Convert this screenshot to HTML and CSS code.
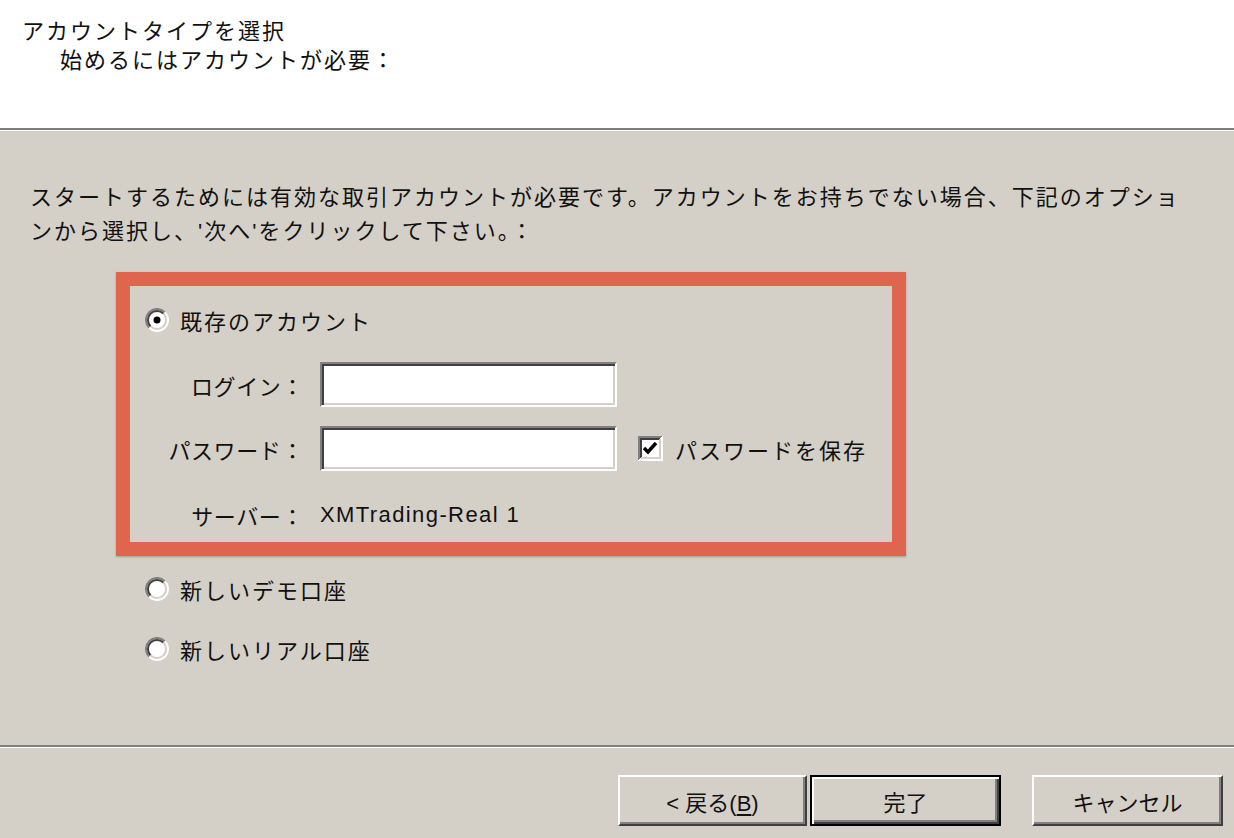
FILE: index.html
```html
<!DOCTYPE html>
<html lang="ja">

<head>
    <meta charset="UTF-8">
    <title>アカウントタイプを選択</title>
    <link rel="stylesheet" href="styles.css">
</head>

<body>
    <div class="wizard">
        <header class="wizard-head">
            <div class="title">アカウントタイプを選択</div>
            <div class="subtitle">始めるにはアカウントが必要：</div>
        </header>

        <main class="wizard-body">
            <p class="intro">スタートするためには有効な取引アカウントが必要です。アカウントをお持ちでない場合、下記のオプショ<br>ンから選択し、'次へ'をクリックして下さい。：</p>

            <div class="options">
                <div class="existing">
                    <label class="option">
                        <svg class="radio" width="24" height="24" viewBox="0 0 24 24">
                            <circle cx="12" cy="12" r="10" fill="#fff" />
                            <path d="M19.8 4.2A11 11 0 0 0 4.2 19.8" fill="none" stroke="#808080" stroke-width="2" />
                            <path d="M4.2 19.8A11 11 0 0 0 19.8 4.2" fill="none" stroke="#fff" stroke-width="2" />
                            <path d="M18.4 5.6A9 9 0 0 0 5.6 18.4" fill="none" stroke="#404040" stroke-width="2" />
                            <path d="M5.6 18.4A9 9 0 0 0 18.4 5.6" fill="none" stroke="#d4d0c8" stroke-width="2" />
                            <circle cx="12" cy="12" r="3.5" fill="#000" />
                        </svg>
                        <span>既存のアカウント</span>
                    </label>

                    <div class="fields">
                        <span class="field-label">ログイン：</span>
                        <input class="sunken" type="text">
                        <span></span>

                        <span class="field-label">パスワード：</span>
                        <input class="sunken" type="password">
                        <label class="check">
                            <svg class="checkbox" width="25" height="25" viewBox="0 0 25 25">
                                <rect x="0" y="0" width="25" height="25" fill="#fff" />
                                <path d="M1 24V1H24" fill="none" stroke="#808080" stroke-width="2" />
                                <path d="M3 22V3H22" fill="none" stroke="#404040" stroke-width="2" />
                                <path d="M1 24H24V1" fill="none" stroke="#fff" stroke-width="2" />
                                <path d="M3 22H22V3" fill="none" stroke="#d4d0c8" stroke-width="2" />
                                <path d="M6 12L10 16L18 7" fill="none" stroke="#000" stroke-width="3.4" />
                            </svg>
                            <span>パスワードを保存</span>
                        </label>

                        <span class="field-label">サーバー：</span>
                        <span class="server">XMTrading-Real 1</span>
                        <span></span>
                    </div>
                </div>

                <label class="option other">
                    <svg class="radio" width="24" height="24" viewBox="0 0 24 24">
                        <circle cx="12" cy="12" r="10" fill="#fff" />
                        <path d="M19.8 4.2A11 11 0 0 0 4.2 19.8" fill="none" stroke="#808080" stroke-width="2" />
                        <path d="M4.2 19.8A11 11 0 0 0 19.8 4.2" fill="none" stroke="#fff" stroke-width="2" />
                        <path d="M18.4 5.6A9 9 0 0 0 5.6 18.4" fill="none" stroke="#404040" stroke-width="2" />
                        <path d="M5.6 18.4A9 9 0 0 0 18.4 5.6" fill="none" stroke="#d4d0c8" stroke-width="2" />
                    </svg>
                    <span>新しいデモ口座</span>
                </label>

                <label class="option other">
                    <svg class="radio" width="24" height="24" viewBox="0 0 24 24">
                        <circle cx="12" cy="12" r="10" fill="#fff" />
                        <path d="M19.8 4.2A11 11 0 0 0 4.2 19.8" fill="none" stroke="#808080" stroke-width="2" />
                        <path d="M4.2 19.8A11 11 0 0 0 19.8 4.2" fill="none" stroke="#fff" stroke-width="2" />
                        <path d="M18.4 5.6A9 9 0 0 0 5.6 18.4" fill="none" stroke="#404040" stroke-width="2" />
                        <path d="M5.6 18.4A9 9 0 0 0 18.4 5.6" fill="none" stroke="#d4d0c8" stroke-width="2" />
                    </svg>
                    <span>新しいリアル口座</span>
                </label>
            </div>
        </main>

        <footer class="wizard-foot">
            <button class="btn btn-back">&lt; 戻る(<u>B</u>)</button>
            <button class="btn btn-default">完了</button>
            <button class="btn btn-cancel">キャンセル</button>
        </footer>
    </div>
</body>

</html>
```

FILE: styles.css
```css
body {
    margin: 0;
    font-family: "Liberation Sans", "Noto Sans CJK JP", sans-serif;
    font-size: 22px;
    letter-spacing: 2px;
    color: #111;
    background-color: #d4d0c8;
}

.wizard {
    height: 100vh;
    display: flex;
    flex-direction: column;
}

/* white top band */
.wizard-head {
    height: 111px;
    padding: 17px 0 0 22px;
    background-color: #fff;
    border-bottom: 2px solid #808080;
    box-shadow: 0 1px 0 #fff;
    line-height: 29px;
}

.subtitle {
    padding-left: 38px;
}

.wizard-body {
    flex: 1;
    padding: 51px 0 0 30px;
}

.intro {
    margin: 0;
    line-height: 34px;
}

.options {
    margin: 23px 0 0 86px;
}

/* highlighted first option */
.existing {
    width: 762px;
    padding: 19px 0 0;
    height: 237px;
    border: 14px solid #e0654f;
    box-shadow: 0 1px 2px rgba(0, 0, 0, 0.25);
}

.option {
    display: flex;
    align-items: center;
    gap: 11px;
    height: 30px;
    padding-left: 15px;
}

.option.other {
    padding-left: 29px;
    margin-top: 30px;
}

.existing + .option.other {
    margin-top: 18px;
}

.radio,
.checkbox {
    flex: none;
    display: block;
}

.fields {
    display: grid;
    grid-template-columns: 174px 297px auto;
    grid-template-rows: 45px 45px 50px;
    column-gap: 16px;
    row-gap: 19px;
    align-items: center;
    margin-top: 27px;
}

.field-label {
    text-align: right;
    letter-spacing: 0.6px;
}

.server {
    letter-spacing: 1.4px;
}

.sunken {
    box-sizing: border-box;
    width: 297px;
    height: 45px;
    margin: 0;
    padding: 0 6px;
    background-color: #fff;
    border: 2px solid;
    border-color: #808080 #fff #fff #808080;
    box-shadow: inset 2px 2px 0 #404040, inset -2px -2px 0 #d4d0c8;
    outline: none;
    font: inherit;
}

.check {
    display: flex;
    align-items: center;
    gap: 12px;
    margin-left: 5px;
}

.wizard-foot {
    height: 63px;
    padding: 28px 11px 0 0;
    border-top: 2px solid #808080;
    box-shadow: inset 0 1px 0 #fff;
    display: flex;
    justify-content: flex-end;
    align-items: flex-start;
}

.btn {
    box-sizing: border-box;
    width: 191px;
    height: 51px;
    padding: 0;
    margin: 0;
    font: inherit;
    color: #111;
    background-color: #d4d0c8;
    border: 2px solid;
    border-color: #fff #404040 #404040 #fff;
    box-shadow: inset -2px -2px 0 #808080;
}

.btn-back {
    width: 189px;
    margin-right: 3px;
}

.btn-default {
    border: 2px solid #000;
    box-shadow: inset 2px 2px 0 #fff, inset -2px -2px 0 #404040, inset -4px -4px 0 #808080;
    margin-right: 31px;
}

.btn u {
    text-underline-offset: 3px;
}
```
